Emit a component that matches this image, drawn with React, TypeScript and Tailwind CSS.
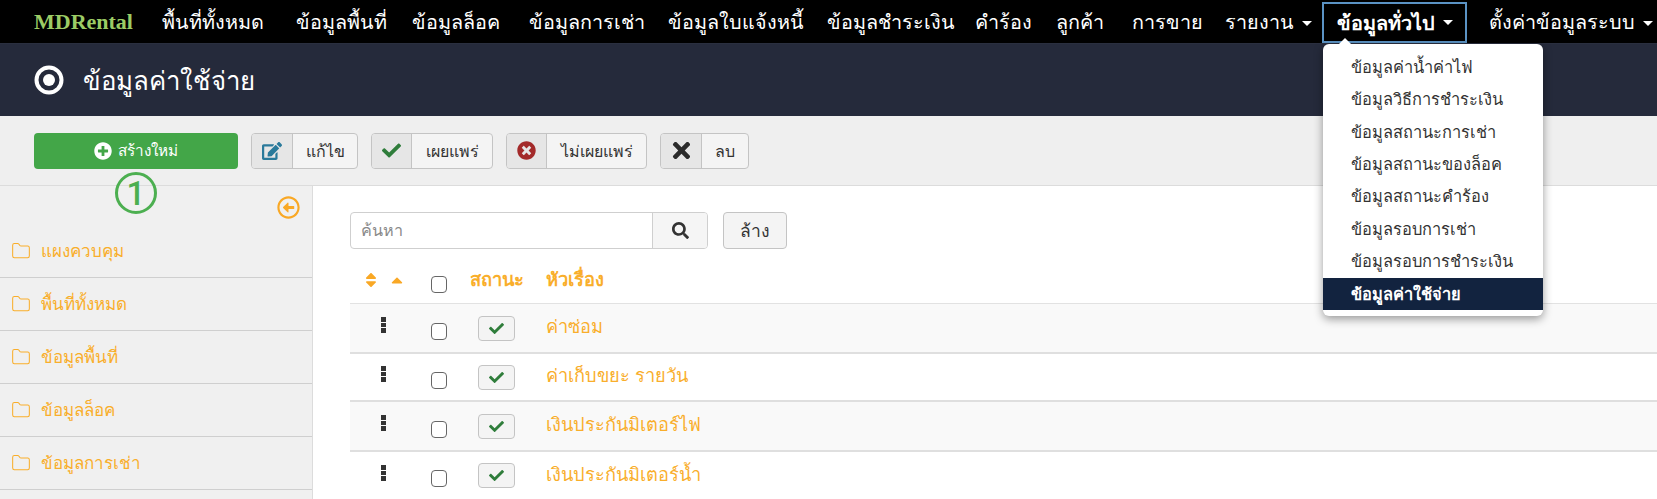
import { Folder } from "lucide-react";
import {
  FaCheck,
  FaPlusCircle,
  FaEdit,
  FaSearch,
  FaTimes,
  FaTimesCircle,
  FaCaretUp,
  FaSort,
  FaRegArrowAltCircleLeft,
} from "react-icons/fa";

const navItems = [
  { label: "พื้นที่ทั้งหมด", caret: false, width: "w-[134px]" },
  { label: "ข้อมูลพื้นที่", caret: false, width: "w-[116px]" },
  { label: "ข้อมูลล็อค", caret: false, width: "w-[117px]" },
  { label: "ข้อมูลการเช่า", caret: false, width: "w-[139px]" },
  { label: "ข้อมูลใบแจ้งหนี้", caret: false, width: "w-[159px]" },
  { label: "ข้อมูลชำระเงิน", caret: false, width: "w-[148px]" },
  { label: "คำร้อง", caret: false, width: "w-[81px]" },
  { label: "ลูกค้า", caret: false, width: "w-[76px]" },
  { label: "การขาย", caret: false, width: "w-[93px]" },
  { label: "รายงาน", caret: true, width: "w-[97px]" },
];

const menuItems = [
  "ข้อมูลค่าน้ำค่าไฟ",
  "ข้อมูลวิธีการชำระเงิน",
  "ข้อมูลสถานะการเช่า",
  "ข้อมูลสถานะของล็อค",
  "ข้อมูลสถานะคำร้อง",
  "ข้อมูลรอบการเช่า",
  "ข้อมูลรอบการชำระเงิน",
];

const sideItems = ["แผงควบคุม", "พื้นที่ทั้งหมด", "ข้อมูลพื้นที่", "ข้อมูลล็อค", "ข้อมูลการเช่า"];

const rows = [
  { label: "ค่าซ่อม", height: "h-[50px]", bg: "bg-[#f9f9f9]" },
  { label: "ค่าเก็บขยะ รายวัน", height: "h-[48px]", bg: "bg-white" },
  { label: "เงินประกันมิเตอร์ไฟ", height: "h-[50px]", bg: "bg-[#f9f9f9]" },
  { label: "เงินประกันมิเตอร์น้ำ", height: "h-[49px]", bg: "bg-white" },
];

const Caret = () => (
  <span className="ml-[8px] inline-block h-0 w-0 border-x-[5px] border-t-[5px] border-x-transparent border-t-current align-middle" />
);

const ToolButton = ({ icon, label, iconWidth, width }: { icon: React.ReactNode; label: string; iconWidth: string; width: string }) => (
  <button className={`flex h-[36px] ${width} overflow-hidden rounded-[4px] border border-[#c4c4c4] bg-[#f4f4f4] text-[16px] text-[#333]`}>
    <span className={`flex h-full ${iconWidth} items-center justify-center border-r border-[#c4c4c4] bg-[#e6e6e6]`}>{icon}</span>
    <span className="flex h-full flex-1 items-center justify-center">{label}</span>
  </button>
);

const DragHandle = () => (
  <div className="flex w-[5px] flex-col gap-[1px]">
    <span className="h-[5px] bg-[#333]" />
    <span className="h-[4px] bg-[#333]" />
    <span className="h-[5px] bg-[#333]" />
  </div>
);

const Checkbox = ({ offset }: { offset: string }) => (
  <span className={`${offset} block h-[17px] w-[16px] rounded-[4px] border border-[#666] bg-white`} />
);

export default function App() {
  return (
    <div className="relative h-[499px] w-[1657px] overflow-hidden bg-white font-['Noto_Sans','Liberation_Sans',sans-serif]">
      <nav className="flex h-[44px] items-center border-b border-[#2a2f3f] bg-black pl-[34px] text-[19.8px] text-white">
        <span className="w-[128px] font-['Liberation_Serif',serif] text-[22px] font-bold text-[#9ccc65]">MDRental</span>
        {navItems.map((item) => (
          <a key={item.label} className={`${item.width} whitespace-nowrap`}>
            {item.label}
            {item.caret && <Caret />}
          </a>
        ))}
        <div className="relative mt-[2px]">
          <a className="flex h-[41px] w-[145px] items-center justify-center whitespace-nowrap border-2 border-[#5b93c4] font-semibold">
            ข้อมูลทั่วไป
            <Caret />
          </a>
          <div className="absolute left-[1px] top-[42px] z-10 w-[220px] rounded-[6px] bg-white pb-[6px] pt-[7px] text-[#333] shadow-[0_3px_10px_rgba(0,0,0,0.4)]">
            <span className="absolute left-[16px] top-[-6px] h-0 w-0 border-x-[6px] border-b-[6px] border-x-transparent border-b-white" />
            {menuItems.map((m) => (
              <div key={m} className="flex h-[32.4px] items-center whitespace-nowrap pl-[28px] text-[16.4px]">
                {m}
              </div>
            ))}
            <div className="flex h-[32.4px] items-center bg-[#12233f] pl-[28px] text-[16.4px] font-semibold text-white">
              ข้อมูลค่าใช้จ่าย
            </div>
          </div>
        </div>
        <a className="ml-[22px] whitespace-nowrap">
          ตั้งค่าข้อมูลระบบ
          <Caret />
        </a>
      </nav>

      <header className="flex h-[72px] items-center gap-[19px] bg-[#252a3b] pl-[34px] text-white">
        <svg width="30" height="30" viewBox="0 0 30 30">
          <circle cx="15" cy="15" r="12.5" fill="none" stroke="white" strokeWidth="4" />
          <circle cx="15" cy="15" r="6" fill="white" />
        </svg>
        <h1 className="text-[25.8px] font-medium">ข้อมูลค่าใช้จ่าย</h1>
      </header>

      <div className="flex h-[70px] items-center gap-[13px] border-b border-[#dcdcdc] bg-[#efefef] pl-[34px]">
        <button className="flex h-[36px] w-[204px] items-center justify-center gap-[6px] rounded-[4px] bg-[#43a648] text-[15.3px] text-white">
          <FaPlusCircle className="text-[18px]" />
          สร้างใหม่
        </button>
        <ToolButton icon={<FaEdit className="text-[20px] text-[#2a7a9b]" />} label="แก้ไข" iconWidth="w-[41px]" width="w-[107px]" />
        <ToolButton icon={<FaCheck className="text-[19px] text-[#2f7d3b]" />} label="เผยแพร่" iconWidth="w-[40px]" width="w-[122px]" />
        <ToolButton icon={<FaTimesCircle className="text-[19px] text-[#a32a2a]" />} label="ไม่เผยแพร่" iconWidth="w-[40px]" width="w-[141px]" />
        <ToolButton icon={<FaTimes className="text-[25px] text-[#2b2b2b]" />} label="ลบ" iconWidth="w-[41px]" width="w-[89px]" />
      </div>

      <div className="absolute left-[115px] top-[172px] z-10 flex h-[42px] w-[42px] items-center justify-center rounded-full border-[3px] border-[#4caf50] bg-transparent font-['Roboto',sans-serif] text-[33px] font-medium leading-none text-[#4caf50]">
        1
      </div>

      <div className="flex">
        <aside className="h-[313px] w-[313px] border-r border-[#dcdcdc] bg-[#f0f0f0] pt-[39px]">
          <div className="absolute left-[277px] top-[196px] text-[23px] text-[#f9a825]">
            <FaRegArrowAltCircleLeft />
          </div>
          {sideItems.map((s) => (
            <div key={s} className="flex h-[53px] items-center gap-[10px] border-b border-[#cfcfcf] pl-[11px] text-[17px] text-[#f9ae2b]">
              <Folder size={20} strokeWidth={1.25} />
              {s}
            </div>
          ))}
        </aside>

        <main className="flex-1 pl-[37px]">
          <div className="mt-[26px] flex gap-[15px]">
            <div className="flex h-[37px] w-[358px] overflow-hidden rounded-[4px] border border-[#cfcfcf]">
              <span className="flex flex-1 items-center pl-[10px] text-[16.2px] text-[#8a8a8a]">ค้นหา</span>
              <span className="flex w-[55px] items-center justify-center border-l border-[#cfcfcf] bg-[#f5f5f5] text-[#333]">
                <FaSearch className="text-[17px]" />
              </span>
            </div>
            <button className="h-[37px] w-[64px] rounded-[4px] border border-[#c4c4c4] bg-[#f4f4f4] text-[17.5px] text-[#333]">ล้าง</button>
          </div>

          <div className="mt-[15px] flex h-[40px] items-center border-b border-[#e2e2e2]">
            <div className="mb-[8px] flex w-[81px] items-center gap-[8px] pl-[12px] text-[#f9a825]">
              <FaSort className="text-[18px]" />
              <FaCaretUp className="text-[18px]" />
            </div>
            <Checkbox offset="mt-[1px]" />
            <span className="mb-[10px] ml-[23px] w-[76px] text-[18.3px] font-semibold text-[#f9ae2b]">สถานะ</span>
            <span className="mb-[10px] text-[18.3px] font-semibold text-[#f9ae2b]">หัวเรื่อง</span>
          </div>

          {rows.map((r) => (
            <div key={r.label} className={`flex ${r.height} items-center border-b-2 border-[#dfdfdf] ${r.bg}`}>
              <div className="mb-[6px] flex w-[81px] justify-center pr-[14px]">
                <DragHandle />
              </div>
              <Checkbox offset="mt-[6px]" />
              <span className="ml-[31px] flex h-[25px] w-[37px] items-center justify-center rounded-[4px] border border-[#c4c4c4] bg-[#f4f4f4]">
                <FaCheck className="text-[15px] text-[#2f7d3b]" />
              </span>
              <span className="mb-[2px] ml-[31px] text-[18.2px] text-[#f9ae2b]">{r.label}</span>
            </div>
          ))}
        </main>
      </div>
    </div>
  );
}
